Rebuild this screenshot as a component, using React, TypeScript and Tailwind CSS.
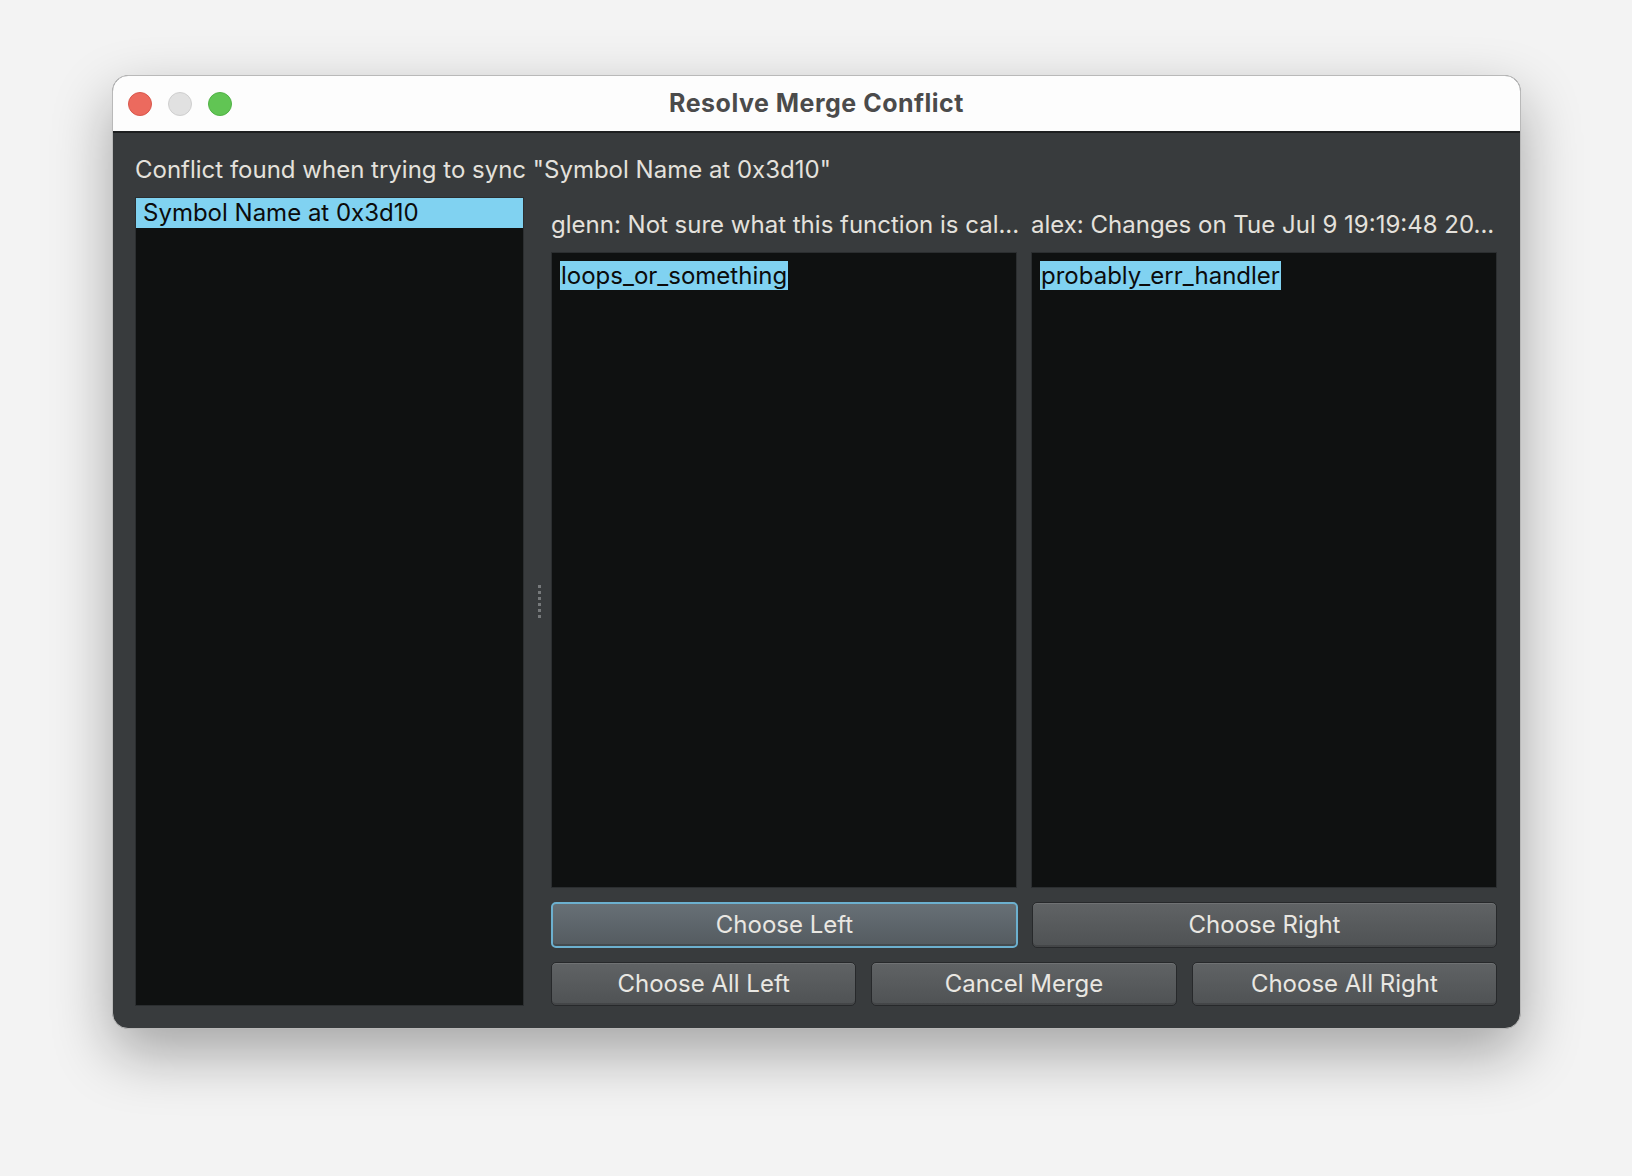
import React from 'react';

const font = { fontFamily: 'Inter, "Noto Sans", sans-serif' };

const Button = ({ label, focused = false }: { label: string; focused?: boolean }) => (
  <div
    className={
      focused
        ? 'flex h-full flex-1 items-center justify-center rounded-[5px] border-2 border-[#6cb0cf] bg-gradient-to-b from-[#677076] to-[#545b60] text-[24px] text-[#e9e7e2] shadow-[inset_0_-2px_0_rgba(0,0,0,0.18)]'
        : 'flex h-full flex-1 items-center justify-center rounded-[5px] border border-[#27292b] bg-gradient-to-b from-[#606365] to-[#4f5254] text-[24px] text-[#e9e7e2] shadow-[inset_0_1px_0_rgba(255,255,255,0.1),inset_0_-2px_0_rgba(0,0,0,0.15)]'
    }
  >
    {label}
  </div>
);

const TextPane = ({ value }: { value: string }) => (
  <div className="min-w-0 flex-1 border border-[#2b2e30] bg-[#0f1111] p-[8px]">
    <span className="inline-block h-[29px] bg-[#80d2f1] px-[1px] text-[24px] leading-[29px] text-[#0b0b0b]">{value}</span>
  </div>
);

export default function App() {
  return (
    <div className="h-[1176px] w-[1632px] bg-[#f3f3f3] pl-[112px] pt-[75px]" style={font}>
      <div className="flex h-[954px] w-[1409px] flex-col overflow-hidden rounded-[16px] border border-[#b9b9b9] bg-[#383b3d] shadow-[0_24px_60px_rgba(0,0,0,0.33)]">
        {/* title bar */}
        <div className="relative flex h-[57px] shrink-0 items-center border-b-2 border-[#1d1f20] bg-[#fdfdfd]">
          <div className="flex gap-[16px] pl-[15px]">
            <span className="h-[24px] w-[24px] rounded-full border border-[#d9574c] bg-[#ec6a5e]" />
            <span className="h-[24px] w-[24px] rounded-full border border-[#cfcfcf] bg-[#e1e1e1]" />
            <span className="h-[24px] w-[24px] rounded-full border border-[#50b245] bg-[#61c554]" />
          </div>
          <div className="absolute inset-0 flex items-center justify-center text-[25px] font-bold tracking-[0.5px] text-[#4b4b4b]">
            Resolve Merge Conflict
          </div>
        </div>

        {/* body */}
        <div className="flex flex-1 flex-col pb-[22px] pl-[22px] pr-[23px] pt-[22px]">
          <div className="h-[29px] text-[24px] leading-[29px] text-[#e4e1dc]">
            Conflict found when trying to sync "Symbol Name at 0x3d10"
          </div>

          <div className="mt-[13px] flex flex-1">
            {/* symbol list */}
            <div className="w-[389px] shrink-0 border border-[#2b2e30] bg-[#0f1111]">
              <div className="h-[30px] bg-[#80d2f1] pl-[7px] text-[24px] leading-[30px] text-[#0b0b0b]">
                Symbol Name at 0x3d10
              </div>
            </div>

            {/* splitter */}
            <div className="flex w-[27px] shrink-0 flex-col items-center justify-center gap-[3px] pl-[4px]">
              {[0, 1, 2, 3, 4, 5].map((i) => (
                <span key={i} className="h-[3px] w-[3px] bg-[#76797b]" />
              ))}
            </div>

            {/* versions */}
            <div className="flex min-w-0 flex-1 flex-col">
              <div className="flex gap-[14px] pb-[13px] pt-[13px] text-[24px] leading-[29px] text-[#e4e1dc]">
                <div className="min-w-0 flex-1 whitespace-nowrap">glenn: Not sure what this function is cal...</div>
                <div className="min-w-0 flex-1 whitespace-nowrap">alex: Changes on Tue Jul 9 19:19:48 20...</div>
              </div>

              <div className="flex flex-1 gap-[14px]">
                <TextPane value="loops_or_something" />
                <TextPane value="probably_err_handler" />
              </div>

              <div className="mt-[14px] flex h-[46px] gap-[14px]">
                <Button label="Choose Left" focused />
                <Button label="Choose Right" />
              </div>

              <div className="mt-[14px] flex h-[44px] gap-[15px]">
                <Button label="Choose All Left" />
                <Button label="Cancel Merge" />
                <Button label="Choose All Right" />
              </div>
            </div>
          </div>
        </div>
      </div>
    </div>
  );
}
